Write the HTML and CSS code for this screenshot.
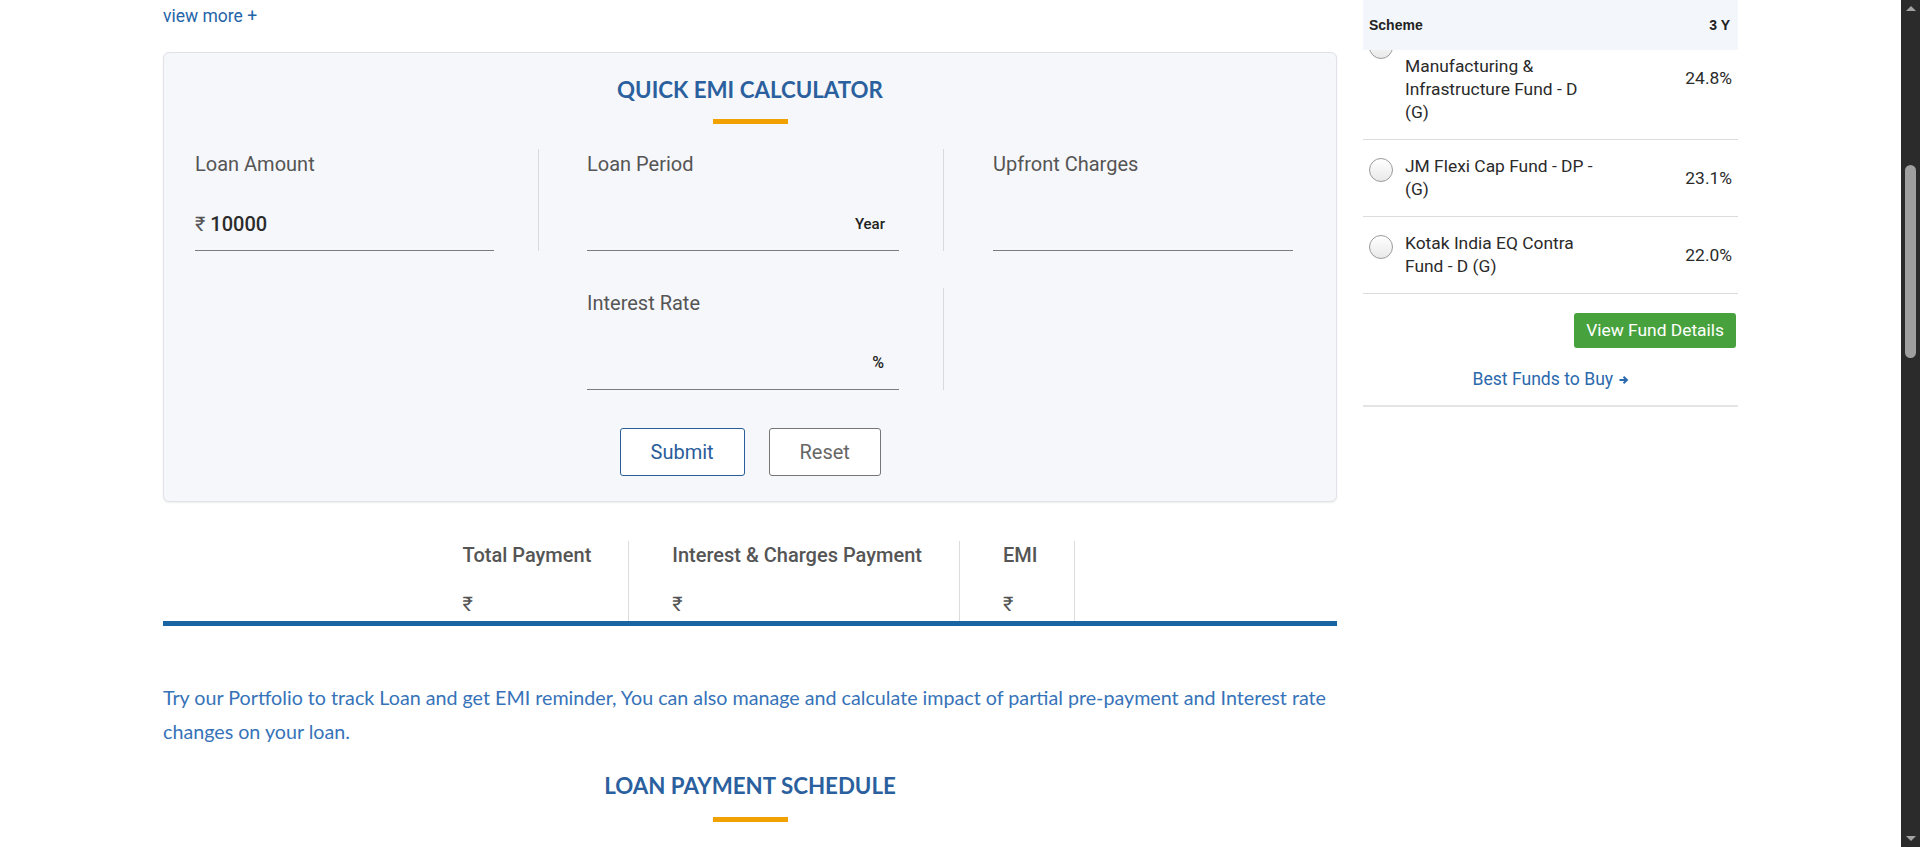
FILE: index.html
```html
<!DOCTYPE html>
<html lang="en">
<head>
<meta charset="utf-8">
<title>Quick EMI Calculator</title>
<link rel="stylesheet" href="styles.css">
</head>
<body>
<div class="screen">
  <div class="viewport">
    <div class="layout">
      <main class="main">
        <a class="view-more" href="#">view more +</a>

        <section class="card">
          <h2 class="title">QUICK EMI CALCULATOR</h2>
          <div class="accent"></div>

          <div class="fields">
            <div class="field c1 divided">
              <div class="label">Loan Amount</div>
              <div class="input"><div class="input-line"><span class="rupee">₹</span> <span class="value">10000</span></div></div>
            </div>
            <div class="field c2 divided">
              <div class="label">Loan Period</div>
              <div class="input"><div class="input-line right"><span class="unit">Year</span></div></div>
            </div>
            <div class="field c3">
              <div class="label">Upfront Charges</div>
              <div class="input"><div class="input-line"></div></div>
            </div>

            <div class="field c1 empty"></div>
            <div class="field c2 divided">
              <div class="label">Interest Rate</div>
              <div class="input"><div class="input-line right"><span class="unit pct">%</span></div></div>
            </div>
            <div class="field c3 empty"></div>
          </div>

          <div class="actions">
            <button class="btn btn-primary" type="button">Submit</button>
            <button class="btn btn-default" type="button">Reset</button>
          </div>
        </section>

        <div class="results">
          <div class="result-row">
            <div class="res-cell">
              <div class="res-head">Total Payment</div>
              <div class="res-val">₹</div>
            </div>
            <div class="res-cell">
              <div class="res-head">Interest &amp; Charges Payment</div>
              <div class="res-val">₹</div>
            </div>
            <div class="res-cell">
              <div class="res-head">EMI</div>
              <div class="res-val">₹</div>
            </div>
          </div>
          <div class="res-bar"></div>
        </div>

        <p class="note">Try our Portfolio to track Loan and get EMI reminder, You can also manage and calculate impact of partial pre-payment and Interest rate changes on your loan.</p>

        <h2 class="title second">LOAN PAYMENT SCHEDULE</h2>
        <div class="accent second-accent"></div>
      </main>

      <aside class="sidebar">
        <div class="side-head">
          <span>Scheme</span>
          <span>3 Y</span>
        </div>
        <div class="fund-list">
          <div class="fund-row">
            <span class="radio"></span>
            <span class="fund-name">ICICI Prudential Manufacturing &amp; Infrastructure Fund - D (G)</span>
            <span class="fund-pct">24.8%</span>
          </div>
          <div class="fund-row">
            <span class="radio"></span>
            <span class="fund-name">JM Flexi Cap Fund - DP - (G)</span>
            <span class="fund-pct">23.1%</span>
          </div>
          <div class="fund-row">
            <span class="radio"></span>
            <span class="fund-name">Kotak India EQ Contra Fund - D (G)</span>
            <span class="fund-pct">22.0%</span>
          </div>
        </div>
        <div class="side-actions">
          <a class="btn-green" href="#">View Fund Details</a>
        </div>
        <div class="side-link">
          <a href="#">Best Funds to Buy <svg class="arrow" width="10" height="10" viewBox="0 0 10 10"><path d="M0.5 5h6.5M4.5 1.8l3.4 3.2-3.4 3.2" fill="none" stroke="currentColor" stroke-width="2"/></svg></a>
        </div>
      </aside>
    </div>
  </div>

  <div class="scrollbar">
    <div class="sb-arrow up"></div>
    <div class="sb-track"><div class="sb-thumb"></div></div>
    <div class="sb-arrow down"></div>
  </div>
</div>
</body>
</html>
```

FILE: styles.css
```css
* { box-sizing: border-box; }

html, body {
  margin: 0;
  padding: 0;
  height: 100%;
  overflow: hidden;
  background: #ffffff;
}

body {
  font-family: Roboto, "Liberation Sans", Arial, sans-serif;
  color: #333;
}

.screen {
  display: flex;
  height: 847px;
  width: 1920px;
}

.viewport {
  flex: 1;
  overflow: hidden;
  background: #fff;
}

.layout {
  display: flex;
  align-items: flex-start;
  gap: 26px;
  padding-left: 163px;
}

/* ---------- main column ---------- */
.main {
  width: 1174px;
  flex: none;
}

.view-more {
  display: block;
  height: 52px;
  line-height: 32px;
  font-size: 17.5px;
  color: #2465a8;
  text-decoration: none;
}

.card {
  background: #f5f7fa;
  border: 1px solid #dfe2e6;
  border-radius: 6px;
  box-shadow: 0 1px 2px rgba(0, 0, 0, 0.07);
  padding: 24px 0 25px;
}

.title {
  margin: 0;
  text-align: center;
  font-family: Lato, "Open Sans", sans-serif;
  font-weight: 700;
  font-size: 22.3px;
  line-height: 26.4px;
  color: #2b609e;
}

.accent {
  width: 75px;
  height: 5px;
  margin: 16px auto 0;
  background: #f2a200;
}

.fields {
  display: grid;
  grid-template-columns: 344px 405px 1fr;
  row-gap: 37px;
  margin: 25px 0 0 31px;
}

.field {
  height: 102px;
  padding-top: 3px;
}

.field.c1 { padding-right: 44px; }
.field.c2 { padding-left: 48px; padding-right: 44px; }
.field.c3 { padding-left: 49px; padding-right: 43px; }

.field.divided { border-right: 1px solid #d8dadd; }

.label {
  font-size: 20px;
  line-height: 24px;
  color: #555;
}

.input {
  height: 75px;
  border-bottom: 1px solid #7b7b7b;
  display: flex;
  flex-direction: column;
  justify-content: flex-end;
  padding-bottom: 14px;
}

.input-line {
  font-size: 20px;
  line-height: 24px;
  min-height: 24px;
  color: #555;
}

.input-line.right {
  text-align: right;
  padding-right: 14px;
}

.rupee { color: #555; }

.value {
  color: #2b2b2b;
  font-weight: 500;
}

.unit {
  font-size: 15px;
  font-weight: 500;
  color: #222;
}

.unit.pct {
  font-size: 16px;
  padding-right: 1px;
}

.actions {
  display: flex;
  justify-content: center;
  gap: 24px;
  margin-top: 38px;
}

.btn {
  height: 48px;
  padding: 0 30px;
  background: #fff;
  border-radius: 3px;
  font-family: Roboto, sans-serif;
  font-size: 20px;
  cursor: pointer;
}

.btn-primary {
  border: 1px solid #2a5d9a;
  color: #2a5d9a;
  width: 125px;
}

.btn-default {
  border: 1px solid #767676;
  color: #666;
  width: 112px;
}

/* ---------- results ---------- */
.results {
  margin-top: 39px;
}

.result-row {
  display: flex;
  justify-content: center;
  padding-right: 5px;
}

.res-cell {
  padding: 2px 37px 5px 43px;
  border-right: 1px solid #dcdcdc;
}

.res-head {
  font-size: 20px;
  line-height: 24px;
  font-weight: 500;
  color: #555;
  white-space: nowrap;
}

.res-val {
  margin-top: 25px;
  font-size: 20px;
  line-height: 24px;
  color: #555;
}

.res-bar {
  height: 5px;
  background: #1964a3;
}

.note {
  margin: 55px 0 0;
  font-family: Lato, "Open Sans", sans-serif;
  font-size: 19.7px;
  line-height: 34px;
  color: #3673b8;
}

.title.second {
  margin-top: 24px;
}

.second-accent {
  margin-top: 17px;
}

/* ---------- sidebar ---------- */
.sidebar {
  width: 375px;
  flex: none;
}

.side-head {
  position: relative;
  z-index: 2;
  height: 50px;
  background: #f3f6fa;
  display: flex;
  align-items: center;
  justify-content: space-between;
  padding: 0 8px 0 6px;
  font-family: "Liberation Sans", Arial, sans-serif;
  font-weight: 700;
  font-size: 14px;
  color: #222;
}

.fund-list {
  position: relative;
  z-index: 1;
  margin-top: -33px;
}

.fund-row {
  display: flex;
  align-items: flex-start;
  padding: 15px 6px;
  border-bottom: 1px solid #dcdcdc;
  font-size: 17.4px;
  line-height: 23px;
  color: #2a2a2a;
}

.radio {
  flex: none;
  width: 24px;
  height: 24px;
  margin-top: 3px;
  border-radius: 50%;
  border: 1px solid #9a9a9a;
  background: linear-gradient(#ffffff, #e9e9e9);
}

.fund-name {
  width: 195px;
  margin-left: 12px;
}

.fund-pct {
  margin-left: auto;
  align-self: center;
}

.side-actions {
  display: flex;
  justify-content: flex-end;
  margin-top: 19px;
  padding-right: 2px;
}

.btn-green {
  display: inline-block;
  height: 35px;
  line-height: 35px;
  padding: 0 12px;
  border-radius: 3px;
  background: #47a23e;
  color: #fff;
  font-size: 17.4px;
  text-decoration: none;
}

.side-link {
  text-align: center;
  margin-top: 21px;
  padding-bottom: 15px;
  border-bottom: 2px solid #e4e4e4;
  line-height: 20px;
}

.side-link a {
  font-size: 17.6px;
  color: #2b69ad;
  text-decoration: none;
}

.arrow {
  vertical-align: 0;
  margin-left: 1px;
}

/* ---------- scrollbar ---------- */
.scrollbar {
  width: 19px;
  flex: none;
  background: #2b2b2b;
  display: flex;
  flex-direction: column;
  align-items: center;
}

.sb-arrow {
  width: 0;
  height: 0;
  border-left: 5px solid transparent;
  border-right: 5px solid transparent;
}

.sb-arrow.up {
  margin-top: 6px;
  border-bottom: 5px solid #a3a3a3;
}

.sb-arrow.down {
  margin-bottom: 6px;
  border-top: 5px solid #a3a3a3;
}

.sb-track {
  flex: 1;
  width: 100%;
  display: flex;
  justify-content: center;
}

.sb-thumb {
  width: 11px;
  height: 193px;
  margin-top: 154px;
  border-radius: 6px;
  background: #9f9f9f;
}
```
